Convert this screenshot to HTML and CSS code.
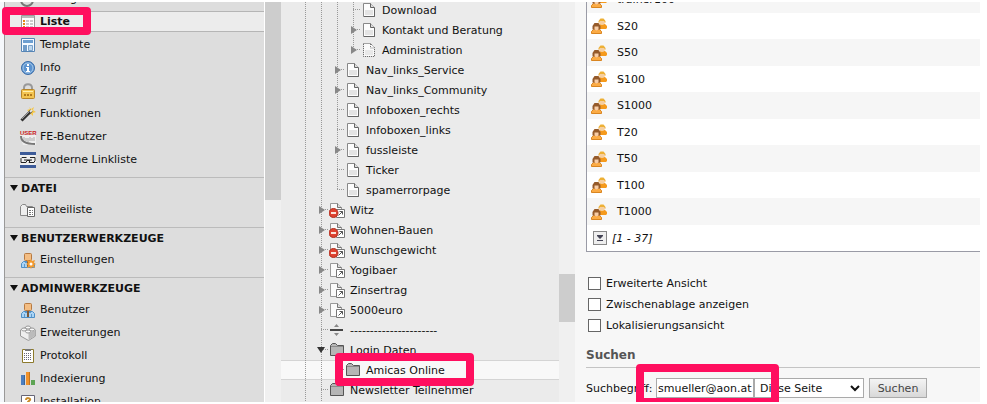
FILE: index.html
```html
<!DOCTYPE html>
<html lang="de">
<head>
    <meta charset="UTF-8">
    <meta name="viewport" content="width=device-width, initial-scale=1.0">
    <title>Liste</title>
    <link rel="stylesheet" href="styles.css">
</head>
<body>

<!-- Shared icons -->
<svg class="sprite" width="0" height="0">
    <symbol id="page" viewBox="0 0 16 16">
        <path d="M2.500 1.500h7l4 4v9h-11z" fill="#fdfdfd" stroke="#888"/>
        <path d="M9.500 1.500v4h4" fill="#ddd" stroke="#666"/>
        <path d="M4 8h8v5H4z" fill="#e4e4e4"/>
        <path d="M13.500 6v8.500H3" fill="none" stroke="#666"/>
    </symbol>
    <symbol id="page-hidden" viewBox="0 0 16 16">
        <path d="M2.500 1.500h7l4 4v9h-11z" fill="#fafafa" stroke="#555" stroke-dasharray="1 1"/>
        <path d="M9.500 2v4h4" fill="none" stroke="#777" stroke-dasharray="1 1"/>
        <path d="M4 8h8v5H4z" fill="#e8e8e8"/>
    </symbol>
    <symbol id="shortcut" viewBox="0 0 16 16">
        <path d="M1.500 1.500h7l4 4v9h-11z" fill="#fafafa" stroke="#999"/>
        <path d="M8.500 1.500v4h4" fill="#ddd" stroke="#777"/>
        <path d="M7.500 7.500h8v8h-8z" fill="#fff" stroke="#777"/>
        <path d="M9.500 13.500l4-4M10.500 9.500h3v3" fill="none" stroke="#555"/>
    </symbol>
    <symbol id="shortcut-off" viewBox="0 0 16 16">
        <use href="#shortcut"/>
        <circle cx="4.500" cy="11" r="4.500" fill="#dd4230" stroke="#b03020"/>
        <path d="M2 10h5v2H2z" fill="#fbe3d8"/>
    </symbol>
    <symbol id="folder" viewBox="0 0 16 16">
        <path d="M1.500 13.500v-10l2-2h3l2 2h6v10z" fill="#b5b5b5" stroke="#555"/>
        <path d="M2 4.500h12" stroke="#8a8a8a"/>
    </symbol>
    <symbol id="divider" viewBox="0 0 16 16">
        <path d="M1 7h13v2H1z" fill="#444"/>
        <path d="M5 5l2.500-3L10 5zM5 11l2.500 3 2.500-3z" fill="#888"/>
    </symbol>
    <symbol id="group" viewBox="0 0 16 16">
        <path d="M8 11V8l1-2h5l2 2v2l-1 1z" fill="#f59a1c"/>
        <circle cx="11" cy="4" r="3" fill="#f6cfa0"/>
        <path d="M7.500 5V3l2-2.500h3l2 2.500v2l-1.500-2H9z" fill="#edb035"/>
        <path d="M.500 15.500v-2l2-2h6l2 2v2z" fill="#fbab45" stroke="#d98520"/>
        <path d="M1.500 11.500V8l2-3h4l2 3v3.500z" fill="#955a2a"/>
        <path d="M3.500 8.500h4v3l-2 1-2-1z" fill="#f8cda6"/>
    </symbol>
    <symbol id="user" viewBox="0 0 16 16">
        <path d="M1.500 15.500v-4l2-2h9l2 2v4z" fill="#a9d3f5" stroke="#4d8fc6"/>
        <path d="M5 10.500h6M4.500 12v3M11.500 12v3" stroke="#5f9acb"/>
        <path d="M7 9h2v6H7z" fill="#7d5938"/>
        <rect x="4.500" y="1.500" width="7" height="7" rx="1" fill="#f3bd83" stroke="#b77a42"/>
    </symbol>
</svg>

<div class="page">
    <nav class="menu">
        <ul class="menu-list menu-top">
            <li><a href="#"><svg class="icon" viewBox="0 0 16 16"><circle cx="7" cy="9" r="6" fill="#ddd" stroke="#777" stroke-width="2"/></svg>Anzeigen</a></li>
            <li><a href="#" class="active"><svg class="icon" viewBox="0 0 16 16"><path d="M1.500 1.500h13v13h-13z" fill="#fff" stroke="#999"/><path d="M2 2h12v2H2z" fill="#bbb"/><path d="M3 6h2v2H3zM3 9h2v2H3zM3 12h2v2H3z" fill="#e48b18"/><path d="M6 7h3M10 7h3M6 10h3M10 10h3M6 13h3M10 13h3" stroke="#999"/></svg>Liste<span class="marker marker-menu"></span></a></li>
            <li><a href="#"><svg class="icon" viewBox="0 0 16 16"><path d="M1.500 1.500h13v13h-13z" fill="#f5faff" stroke="#5685b5"/><path d="M3 3h10v3H3z" fill="#6d9fd0"/><path d="M3 8h4v6H3z" fill="#719dc9"/><path d="M8.500 8.500h4v5h-4z" fill="#bed8ee" stroke="#7ba3ca"/></svg>Template</a></li>
            <li><a href="#"><svg class="icon" viewBox="0 0 16 16"><circle cx="8" cy="8" r="6.500" fill="#5c93cf" stroke="#3a6ca8"/><circle cx="8" cy="8" r="5" fill="none" stroke="#a9cbea"/><path d="M7 4h2v2H7zM6 7h3v4h1v1H6v-1h1V8H6z" fill="#fff"/></svg>Info</a></li>
            <li><a href="#"><svg class="icon" viewBox="0 0 16 16"><path d="M4 8V5c0-5 8-5 8 0v3" fill="none" stroke="#999" stroke-width="2"/><rect x="1.500" y="6.500" width="13" height="9" rx="1" fill="#f3c451" stroke="#b8862a"/><path d="M3 8.500h10" stroke="#fff0b0"/><path d="M4 11h2v2H4zM7 11h2v2H7zM10 11h2v2h-2z" fill="#b27b1e"/></svg>Zugriff</a></li>
            <li><a href="#"><svg class="icon" viewBox="0 0 16 16"><path d="M9 1l2 2 3-2-1 3 3 2-3 1v3l-2-2-3 1 1-3-2-2 3-1z" fill="#f5c84c"/><path d="M1.500 14.500l10-10" stroke="#333" stroke-width="3"/><path d="M2 13l7-7" stroke="#999"/><path d="M10 6l2-2" stroke="#e8e8e8" stroke-width="2"/></svg>Funktionen</a></li>
            <li><a href="#"><svg class="icon" viewBox="0 0 16 16"><path d="M0 6h16v10H3z" fill="#eee"/><text x="0" y="6" class="user-tag">USER</text><path d="M1 7c0 5 4 8 14 8" fill="none" stroke="#777" stroke-width="2"/><path d="M4 8v3M6 9v3M8 9v4M10 8v4M12 9v3M14 8v4" fill="none" stroke="#aaa"/></svg>FE-Benutzer</a></li>
            <li><a href="#"><svg class="icon" viewBox="0 0 16 16"><path d="M0 0h16v16H0z" fill="#eee"/><path d="M0 0h16v3H0zM0 13h16v3H0z" fill="#3d5b98"/><path d="M6.500 5.500H2l-1 1v4h5l1-2h3l-1 2h5l1-2v-3h-5M4 8h8" fill="none" stroke="#222"/></svg>Moderne Linkliste</a></li>
        </ul>

        <section class="menu-section">
            <h2>Datei</h2>
            <ul class="menu-list">
                <li><a href="#"><svg class="icon" viewBox="0 0 16 16"><path d="M.500 13.500v-9l2-2h3l1 2h6v9z" fill="#eee" stroke="#888"/><path d="M7.500 5.500h7v9h-7z" fill="#fff" stroke="#666"/><path d="M9 8h2v1H9zM12 8h1v1h-1zM9 10h2v1H9zM12 10h1v1h-1zM9 12h2v1H9zM12 12h1v1h-1z" fill="#777"/></svg>Dateiliste</a></li>
            </ul>
        </section>

        <section class="menu-section">
            <h2>Benutzerwerkzeuge</h2>
            <ul class="menu-list">
                <li><a href="#"><svg class="icon" viewBox="0 0 16 16"><use href="#user"/><path d="M11 7l1 2 3-1-1 3 2 1-2 1 1 3-3-1-1 2-1-2-3 1 1-3-2-1 2-1-1-3 3 1z" fill="#f39a2e"/><circle cx="11" cy="12" r="1.500" fill="#fff"/></svg>Einstellungen</a></li>
            </ul>
        </section>

        <section class="menu-section">
            <h2>Adminwerkzeuge</h2>
            <ul class="menu-list">
                <li><a href="#"><svg class="icon"><use href="#user"/></svg>Benutzer</a></li>
                <li><a href="#"><svg class="icon" viewBox="0 0 16 16"><path d="M.500 5l7-3.500 8 3.500v6l-7 4.500-8-4.500z" fill="#eee" stroke="#999"/><path d="M8.500 8v7l7-4.500V5z" fill="#bbb"/><g fill="#f8f8f8" stroke="#999"><ellipse cx="8" cy="2.500" rx="2.500" ry="1.500"/><ellipse cx="4" cy="4.500" rx="2.500" ry="1.500"/><ellipse cx="12" cy="4.500" rx="2.500" ry="1.500"/><ellipse cx="8" cy="6.500" rx="2.500" ry="1.500"/></g></svg>Erweiterungen</a></li>
                <li><a href="#"><svg class="icon" viewBox="0 0 16 16"><path d="M2.500 1.500h11v13h-11z" fill="#fff" stroke="#8c7a2c"/><path d="M5 1h6v2H5z" fill="#777"/><path d="M4 5.500h8M4 7.500h8M4 9.500h8M4 11.500h8" stroke="#667" stroke-dasharray="1 1"/></svg>Protokoll</a></li>
                <li><a href="#"><svg class="icon" viewBox="0 0 16 16"><path d="M1 4h4v10H1z" fill="#4c7fc0"/><path d="M6 1h4v13H6z" fill="#f0922b"/><path d="M11 9h4v5h-4z" fill="#5da454"/><path d="M4 4h1v10H4zM9 1h1v13H9z" fill="#0003"/></svg>Indexierung</a></li>
                <li><a href="#"><svg class="icon" viewBox="0 0 16 16"><path d="M1.500 1.500h13v13h-13z" fill="#fff" stroke="#667"/><path d="M6 6c0-3 5-2 4 0L8 8v2" fill="none" stroke="#c88a28" stroke-width="2"/></svg>Installation</a></li>
            </ul>
        </section>
    </nav>

    <div class="scrollbar"><div class="thumb thumb-menu"></div></div>

    <div class="tree">
        <ul>
            <li><i class="line"></i><i class="line"></i><i class="line"></i><i class="line tee"></i><svg class="icon"><use href="#page"/></svg><a href="#">Download</a></li>
            <li><i class="line"></i><i class="line"></i><i class="line"></i><i class="line tee closed"></i><svg class="icon"><use href="#page"/></svg><a href="#">Kontakt und Beratung</a></li>
            <li><i class="line"></i><i class="line"></i><i class="line"></i><i class="line tee last closed"></i><svg class="icon"><use href="#page-hidden"/></svg><a href="#">Administration</a></li>
            <li><i class="line"></i><i class="line"></i><i class="line tee closed"></i><svg class="icon"><use href="#page"/></svg><a href="#">Nav_links_Service</a></li>
            <li><i class="line"></i><i class="line"></i><i class="line tee closed"></i><svg class="icon"><use href="#page"/></svg><a href="#">Nav_links_Community</a></li>
            <li><i class="line"></i><i class="line"></i><i class="line tee"></i><svg class="icon"><use href="#page"/></svg><a href="#">Infoboxen_rechts</a></li>
            <li><i class="line"></i><i class="line"></i><i class="line tee"></i><svg class="icon"><use href="#page"/></svg><a href="#">Infoboxen_links</a></li>
            <li><i class="line"></i><i class="line"></i><i class="line tee closed"></i><svg class="icon"><use href="#page"/></svg><a href="#">fussleiste</a></li>
            <li><i class="line"></i><i class="line"></i><i class="line tee"></i><svg class="icon"><use href="#page"/></svg><a href="#">Ticker</a></li>
            <li><i class="line"></i><i class="line"></i><i class="line tee last"></i><svg class="icon"><use href="#page"/></svg><a href="#">spamerrorpage</a></li>
            <li><i class="line"></i><i class="line tee closed"></i><svg class="icon"><use href="#shortcut-off"/></svg><a href="#">Witz</a></li>
            <li><i class="line"></i><i class="line tee closed"></i><svg class="icon"><use href="#shortcut-off"/></svg><a href="#">Wohnen-Bauen</a></li>
            <li><i class="line"></i><i class="line tee closed"></i><svg class="icon"><use href="#shortcut-off"/></svg><a href="#">Wunschgewicht</a></li>
            <li><i class="line"></i><i class="line tee closed"></i><svg class="icon"><use href="#shortcut"/></svg><a href="#">Yogibaer</a></li>
            <li><i class="line"></i><i class="line tee closed"></i><svg class="icon"><use href="#shortcut"/></svg><a href="#">Zinsertrag</a></li>
            <li><i class="line"></i><i class="line tee closed"></i><svg class="icon"><use href="#shortcut"/></svg><a href="#">5000euro</a></li>
            <li><i class="line"></i><i class="line tee"></i><svg class="icon"><use href="#divider"/></svg><a href="#">----------------------</a></li>
            <li><i class="line"></i><i class="line tee open"></i><svg class="icon"><use href="#folder"/></svg><a href="#">Login Daten</a></li>
            <li class="selected"><i class="line"></i><i class="line"></i><i class="line tee last"></i><svg class="icon"><use href="#folder"/></svg><a href="#">Amicas Online</a><span class="marker marker-tree"></span></li>
            <li><i class="line"></i><i class="line tee"></i><svg class="icon"><use href="#folder"/></svg><a href="#">Newsletter Teilnehmer</a></li>
            <li><i class="line"></i><i class="line"></i></li>
        </ul>
    </div>

    <div class="scrollbar"><div class="thumb thumb-tree"></div></div>

    <main class="content">
        <table class="records">
            <tbody>
                <tr><td class="cell-icon"><svg class="icon"><use href="#group"/></svg></td><td>trainer100</td></tr>
                <tr><td class="cell-icon"><svg class="icon"><use href="#group"/></svg></td><td>S20</td></tr>
                <tr><td class="cell-icon"><svg class="icon"><use href="#group"/></svg></td><td>S50</td></tr>
                <tr><td class="cell-icon"><svg class="icon"><use href="#group"/></svg></td><td>S100</td></tr>
                <tr><td class="cell-icon"><svg class="icon"><use href="#group"/></svg></td><td>S1000</td></tr>
                <tr><td class="cell-icon"><svg class="icon"><use href="#group"/></svg></td><td>T20</td></tr>
                <tr><td class="cell-icon"><svg class="icon"><use href="#group"/></svg></td><td>T50</td></tr>
                <tr><td class="cell-icon"><svg class="icon"><use href="#group"/></svg></td><td>T100</td></tr>
                <tr><td class="cell-icon"><svg class="icon"><use href="#group"/></svg></td><td>T1000</td></tr>
            </tbody>
            <tfoot>
                <tr>
                    <td colspan="2">
                        <div class="pager">
                            <button type="button" class="expand" aria-label="Alle anzeigen"><svg width="14" height="14" viewBox="0 0 14 14"><path d="M4 4h6v1L7 8 4 5zM4 9h6v1H4z" fill="#445"/></svg></button>
                            <span>[1 - 37]</span>
                        </div>
                    </td>
                </tr>
            </tfoot>
        </table>

        <div class="options">
            <label><input type="checkbox">Erweiterte Ansicht</label>
            <label><input type="checkbox">Zwischenablage anzeigen</label>
            <label><input type="checkbox">Lokalisierungsansicht</label>
        </div>

        <h3>Suchen</h3>

        <form class="search">
            <label for="term">Suchbegriff:</label>
            <div class="term">
                <input type="text" id="term" value="smueller@aon.at">
                <span class="marker marker-search"></span>
            </div>
            <select aria-label="Suchebene">
                <option>Diese Seite</option>
            </select>
            <button type="button" class="submit">Suchen</button>
        </form>
    </main>
</div>

</body>
</html>
```

FILE: styles.css
```css
* {
    box-sizing: border-box;
}

body {
    margin: 0;
    padding: 2px 7px 2px 0;
    height: 100vh;
    background-color: #fff;
    font-family: Verdana, "DejaVu Sans", sans-serif;
    font-size: 11px;
    color: #111;
}

ul {
    list-style: none;
    margin: 0;
    padding: 0;
}

a {
    color: inherit;
    text-decoration: none;
}

.sprite {
    display: block;
}

.page {
    display: flex;
    height: 100%;
    padding-left: 4px;
    background-color: #f5f8fc;
    overflow: hidden;
}

.icon {
    flex: none;
    display: block;
    width: 16px;
    height: 16px;
    overflow: visible;
}

/* Module menu */
.menu {
    flex: 0 0 261px;
    background-color: #ddd;
    border-left: 1px solid #999;
    border-right: 1px solid #fff;
}

.menu-list {
    padding-bottom: 7px;
}

/* The menu is scrolled down by a few rows */
.menu-top {
    margin-top: -15px;
    padding-bottom: 6px;
}

.menu-list li {
    padding: 1px 0;
}

.menu-list a {
    position: relative;
    display: flex;
    align-items: center;
    gap: 4px;
    height: 21px;
    padding-left: 15px;
    border: solid transparent;
    border-width: 1px 0;
}

.menu-list .active {
    background-color: #ececec;
    border-color: #b5b5b5;
    font-weight: bold;
}

.menu-section {
    border-top: 1px solid #bbb;
}

.menu-section h2 {
    display: flex;
    align-items: center;
    gap: 3px;
    height: 20px;
    margin: 0;
    padding-left: 5px;
    font-size: 11px;
    text-transform: uppercase;
}

.menu-section .menu-list {
    padding-bottom: 6px;
}

.menu-section h2::before {
    content: "";
    border: 4px solid transparent;
    border-top: 6px solid #111;
    border-bottom: 0;
}

.user-tag {
    font-family: "Liberation Sans", Arial, sans-serif;
    font-size: 6px;
    font-weight: bold;
    fill: #c22;
}

/* Scrollbars */
.scrollbar {
    flex: 0 0 16px;
    background-color: #f0f0f0;
}

.thumb {
    background-color: #cdcdcd;
}

.thumb-menu {
    height: 198px;
}

.thumb-tree {
    height: 48px;
    margin-top: 272px;
}

/* Page tree */
.tree {
    flex: 0 0 278px;
    background-color: #ebebeb;
}

.tree ul {
    margin-top: -2px;
}

.tree li {
    position: relative;
    display: flex;
    align-items: center;
    height: 20px;
    padding-left: 16px;
    white-space: nowrap;
}

.tree li a {
    margin-left: 5px;
}

.tree .selected {
    background-color: #f8f8f8;
    box-shadow: inset 0 1px #d4d4d4, inset 0 -1px #d4d4d4;
}

.line {
    display: flex;
    align-items: center;
    flex: none;
    width: 16px;
    height: 20px;
    background: repeating-linear-gradient(#999 0 1px, transparent 1px 2px) 8px 0 / 1px 20px no-repeat;
}

.tee {
    background:
        repeating-linear-gradient(#999 0 1px, transparent 1px 2px) 8px 0 / 1px 20px no-repeat,
        repeating-linear-gradient(90deg, #999 0 1px, transparent 1px 2px) 8px 9px / 8px 1px no-repeat;
}

.last {
    background-size: 1px 10px, 8px 1px;
}

.closed::before {
    content: "";
    margin-left: 6px;
    border: 4px solid transparent;
    border-left: 6px solid #888;
    border-right: 0;
}

.open::before {
    content: "";
    margin-left: 4px;
    border: 4px solid transparent;
    border-top: 6px solid #333;
    border-bottom: 0;
}

/* Record list */
.content {
    flex: 1;
    min-width: 0;
    padding-left: 11px;
    background-color: #f7f7f7;
}

.records {
    width: 100%;
    margin-top: -16px;
    border-left: 1px solid #9a9ba6;
    border-bottom: 1px solid #9a9ba6;
    border-spacing: 0;
    background-color: #fff;
}

.records td {
    height: 26px;
    padding: 0;
}

.records tbody tr:nth-child(odd) td {
    height: 27px;
    background-color: #f6f6f6;
}

.records .cell-icon {
    width: 30px;
    padding-left: 4px;
}

.pager {
    display: flex;
    align-items: center;
    gap: 5px;
    padding-left: 6px;
    font-style: italic;
}

.expand {
    width: 14px;
    height: 14px;
    padding: 0;
    border: 1px solid #888;
    background-color: #eee;
}

.expand svg {
    display: block;
    margin: -1px;
}

.options {
    display: flex;
    flex-direction: column;
    margin-top: 21px;
}

.options label {
    display: flex;
    align-items: center;
    gap: 5px;
    height: 21px;
}

.options input {
    appearance: none;
    width: 13px;
    height: 13px;
    margin: 0 0 0 2px;
    border: 1px solid #666;
    background-color: #fff;
}

/* Search form */
.content h3 {
    height: 20px;
    margin: 12px 0 10px;
    border-bottom: 1px solid #c4c4c4;
    font-size: 12px;
    line-height: 15px;
    color: #555;
}

.search {
    display: flex;
    align-items: center;
    white-space: nowrap;
}

.search label {
    flex: 0 0 70px;
}

.search input,
.search select,
.search button {
    display: block;
    height: 20px;
    border: 1px solid #aaa;
    font: inherit;
    color: #111;
}

.term {
    position: relative;
}

.search input {
    width: 98px;
    padding: 0 1px;
    background-color: #fff;
}

.search select {
    width: 110px;
    padding: 0 0 0 1px;
    background-color: #fff;
}

.search .submit {
    width: 58px;
    margin-left: 5px;
    padding: 0;
    background: linear-gradient(#f4f4f4, #d8d8d8);
    color: #444;
}

/* Highlight frames over the controls */
.marker {
    position: absolute;
    z-index: 1;
    border: 8px solid #ff0f5f;
    border-radius: 4px;
    pointer-events: none;
}

.marker-menu {
    left: -3px;
    top: -5px;
    width: 89px;
    height: 28px;
}

.marker-tree {
    left: 54px;
    top: -7px;
    width: 139px;
    height: 33px;
}

.marker-search {
    left: -20px;
    top: -14px;
    width: 143px;
    height: 42px;
}
```
